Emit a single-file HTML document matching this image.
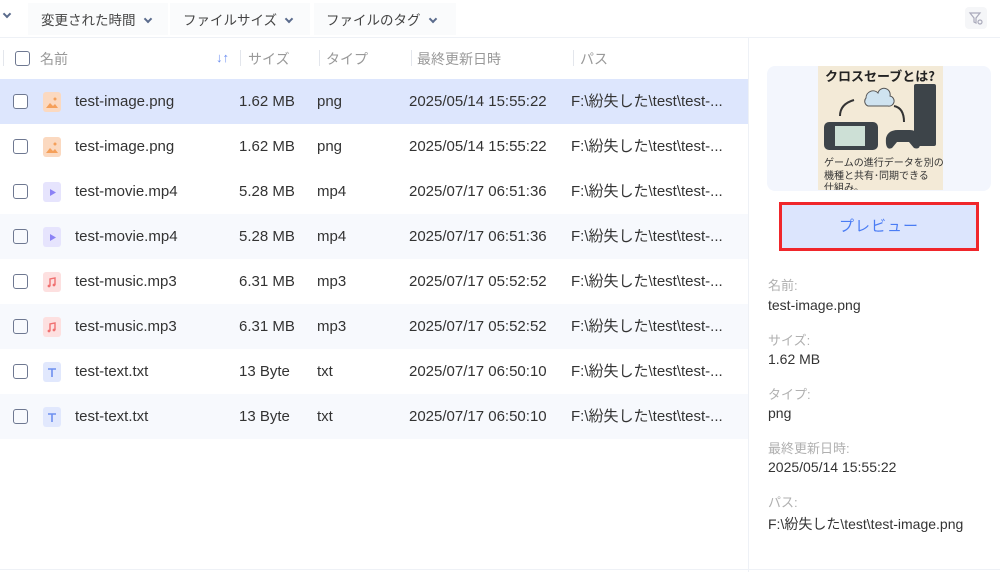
<!DOCTYPE html>
<html><head><meta charset="utf-8"><style>
*{margin:0;padding:0;box-sizing:border-box}
body{width:1000px;height:572px;background:#fff;font-family:"Liberation Sans","Noto Sans CJK JP",sans-serif;color:#333;position:relative;overflow:hidden}
.tb{position:absolute;left:0;top:0;width:1000px;height:38px;border-bottom:1px solid #eef1f6}
.tb span{position:absolute;top:9px;font-size:13.5px;color:#444}
.chev{display:inline-block;width:6px;height:6px;border-right:2px solid #5a6b8c;border-bottom:2px solid #5a6b8c;transform:rotate(45deg);margin-left:9px;position:relative;top:-3px}
.hdr{position:absolute;top:38px;left:0;width:748px;height:41px;font-size:14px;color:#999}
.hdr span{position:absolute;top:11px}
.sep{position:absolute;top:12px;width:1px;height:16px;background:#e3e6ec}
.cb{position:absolute;width:15px;height:15px;border:1.5px solid #6e7891;border-radius:3px}
.row{position:absolute;left:0;width:748px;height:45px;font-size:15px;color:#333}
.row span{position:absolute;top:0;line-height:45px;height:45px;white-space:nowrap}
.ic{position:absolute;left:43px;top:13px;width:18px;height:20px;border-radius:3px}
.side{position:absolute;left:748px;top:38px;width:1px;height:534px;background:#eef1f6}
.lab{position:absolute;left:768px;font-size:13px;color:#b0b0b0}
.val{position:absolute;left:768px;font-size:14px;color:#333}
</style></head><body>
<div class="tb">
<span style="left:4px;top:8px"><i class="chev" style="margin-left:0"></i></span>
<div style="position:absolute;left:28px;top:3px;width:140px;height:32px;background:#fafbfc"></div>
<div style="position:absolute;left:170px;top:3px;width:140px;height:32px;background:#fafbfc"></div>
<div style="position:absolute;left:314px;top:3px;width:142px;height:32px;background:#fafbfc"></div>
<span style="left:41px">変更された時間<i class="chev"></i></span>
<span style="left:183px">ファイルサイズ<i class="chev"></i></span>
<span style="left:326px">ファイルのタグ<i class="chev"></i></span>
<div style="position:absolute;left:965px;top:7px;width:22px;height:22px;background:#f5f6f8;border-radius:4px"></div>
<svg style="position:absolute;left:968px;top:10px" width="16" height="16" viewBox="0 0 16 16"><path d="M2 3h10l-4 5v5l-2-1V8z" fill="none" stroke="#aab" stroke-width="1.2"/><circle cx="12" cy="12" r="2" fill="none" stroke="#aab" stroke-width="1.2"/></svg>
</div>
<div class="hdr">
<div class="sep" style="left:3px"></div>
<div class="cb" style="left:15px;top:13px"></div>
<span style="left:40px">名前</span>
<span style="left:216px;color:#6d8ff0;font-size:13px;top:12px">↓↑</span>
<div class="sep" style="left:240px"></div><span style="left:248px">サイズ</span>
<div class="sep" style="left:319px"></div><span style="left:326px">タイプ</span>
<div class="sep" style="left:411px"></div><span style="left:417px">最終更新日時</span>
<div class="sep" style="left:573px"></div><span style="left:580px">パス</span>
</div>

<div class="row" style="top:79px;background:#dde6fd"><div class="cb" style="left:13px;top:15px;background:#fff"></div><div class="ic" style="background:#fbd9c0"><svg width="18" height="20"><path d="M3 16l4-5 3 3 2-2 3 4z" fill="#f5a05a"/><circle cx="12" cy="7" r="1.5" fill="#f5a05a"/></svg></div><span style="left:75px">test-image.png</span><span style="left:239px">1.62 MB</span><span style="left:317px">png</span><span style="left:409px">2025/05/14 15:55:22</span><span style="left:571px">F:\紛失した\test\test-...</span></div>
<div class="row" style="top:124px;background:#fff"><div class="cb" style="left:13px;top:15px"></div><div class="ic" style="background:#fbd9c0"><svg width="18" height="20"><path d="M3 16l4-5 3 3 2-2 3 4z" fill="#f5a05a"/><circle cx="12" cy="7" r="1.5" fill="#f5a05a"/></svg></div><span style="left:75px">test-image.png</span><span style="left:239px">1.62 MB</span><span style="left:317px">png</span><span style="left:409px">2025/05/14 15:55:22</span><span style="left:571px">F:\紛失した\test\test-...</span></div>
<div class="row" style="top:169px;background:#fff"><div class="cb" style="left:13px;top:15px"></div><div class="ic" style="background:#e6e4fd"><svg width="18" height="20"><path d="M7 7l6 3.5-6 3.5z" fill="#8b82f5"/></svg></div><span style="left:75px">test-movie.mp4</span><span style="left:239px">5.28 MB</span><span style="left:317px">mp4</span><span style="left:409px">2025/07/17 06:51:36</span><span style="left:571px">F:\紛失した\test\test-...</span></div>
<div class="row" style="top:214px;background:#f7f9fd"><div class="cb" style="left:13px;top:15px"></div><div class="ic" style="background:#e6e4fd"><svg width="18" height="20"><path d="M7 7l6 3.5-6 3.5z" fill="#8b82f5"/></svg></div><span style="left:75px">test-movie.mp4</span><span style="left:239px">5.28 MB</span><span style="left:317px">mp4</span><span style="left:409px">2025/07/17 06:51:36</span><span style="left:571px">F:\紛失した\test\test-...</span></div>
<div class="row" style="top:259px;background:#fff"><div class="cb" style="left:13px;top:15px"></div><div class="ic" style="background:#fde0e0"><svg width="18" height="20"><path d="M7 14V7l5-1v7" fill="none" stroke="#f07070" stroke-width="1.4"/><circle cx="6" cy="14" r="1.4" fill="#f07070"/><circle cx="11" cy="13" r="1.4" fill="#f07070"/></svg></div><span style="left:75px">test-music.mp3</span><span style="left:239px">6.31 MB</span><span style="left:317px">mp3</span><span style="left:409px">2025/07/17 05:52:52</span><span style="left:571px">F:\紛失した\test\test-...</span></div>
<div class="row" style="top:304px;background:#f7f9fd"><div class="cb" style="left:13px;top:15px"></div><div class="ic" style="background:#fde0e0"><svg width="18" height="20"><path d="M7 14V7l5-1v7" fill="none" stroke="#f07070" stroke-width="1.4"/><circle cx="6" cy="14" r="1.4" fill="#f07070"/><circle cx="11" cy="13" r="1.4" fill="#f07070"/></svg></div><span style="left:75px">test-music.mp3</span><span style="left:239px">6.31 MB</span><span style="left:317px">mp3</span><span style="left:409px">2025/07/17 05:52:52</span><span style="left:571px">F:\紛失した\test\test-...</span></div>
<div class="row" style="top:349px;background:#fff"><div class="cb" style="left:13px;top:15px"></div><div class="ic" style="background:#e1e8fd"><svg width="18" height="20"><path d="M5 7h8M9 7v8" stroke="#6d8ff0" stroke-width="1.6"/></svg></div><span style="left:75px">test-text.txt</span><span style="left:239px">13 Byte</span><span style="left:317px">txt</span><span style="left:409px">2025/07/17 06:50:10</span><span style="left:571px">F:\紛失した\test\test-...</span></div>
<div class="row" style="top:394px;background:#f7f9fd"><div class="cb" style="left:13px;top:15px"></div><div class="ic" style="background:#e1e8fd"><svg width="18" height="20"><path d="M5 7h8M9 7v8" stroke="#6d8ff0" stroke-width="1.6"/></svg></div><span style="left:75px">test-text.txt</span><span style="left:239px">13 Byte</span><span style="left:317px">txt</span><span style="left:409px">2025/07/17 06:50:10</span><span style="left:571px">F:\紛失した\test\test-...</span></div>

<div class="side"></div>
<div style="position:absolute;left:767px;top:66px;width:224px;height:125px;background:#f3f6fd;border-radius:8px"></div>
<svg style="position:absolute;left:818px;top:66px" width="125" height="124" viewBox="0 0 125 124">
<rect width="125" height="124" fill="#f3ead7"/>
<text x="62" y="15" text-anchor="middle" font-size="13" font-weight="bold" fill="#222" font-family="Noto Sans CJK JP,sans-serif">クロスセーブとは?</text>
<path d="M48 32a7 7 0 0 1 12-5a6 6 0 0 1 12 3a5 5 0 0 1-2 10h-20a5 5 0 0 1-2-8z" fill="#cfe3f0" stroke="#555"/>
<path d="M22 50q0-12 14-16M76 40q10 2 10 16" fill="none" stroke="#333" stroke-width="2"/>
<rect x="96" y="18" width="22" height="62" rx="2" fill="#3d4449"/>
<rect x="6" y="56" width="54" height="28" rx="5" fill="#3d4449"/>
<rect x="17" y="60" width="30" height="20" fill="#cde0d6"/>
<path d="M68 72q2-8 12-8h12q10 0 10 14q0 6-6 4l-5-6h-12l-5 6q-7 3-6-10z" fill="#3d4449"/>
<text x="6" y="100" font-size="10" fill="#333" font-family="Noto Sans CJK JP,sans-serif">ゲームの進行データを別の</text>
<text x="6" y="113" font-size="10" fill="#333" font-family="Noto Sans CJK JP,sans-serif">機種と共有･同期できる</text>
<text x="6" y="125" font-size="10" fill="#333" font-family="Noto Sans CJK JP,sans-serif">仕組み。</text>
</svg>
<div style="position:absolute;left:779px;top:202px;width:200px;height:49px;border:3px solid #f0262b;background:#dce5fd;color:#4a7cf4;font-size:15px;text-align:center;line-height:43px;letter-spacing:1px">プレビュー</div>
<div class="lab" style="top:275px">名前:</div><div class="val" style="top:297px">test-image.png</div>
<div class="lab" style="top:330px">サイズ:</div><div class="val" style="top:351px">1.62 MB</div>
<div class="lab" style="top:384px">タイプ:</div><div class="val" style="top:405px">png</div>
<div class="lab" style="top:438px">最終更新日時:</div><div class="val" style="top:459px">2025/05/14 15:55:22</div>
<div class="lab" style="top:492px">パス:</div><div class="val" style="top:514px">F:\紛失した\test\test-image.png</div>
<div style="position:absolute;left:0;top:569px;width:1000px;height:1px;background:#eef1f6"></div>
</body></html>
